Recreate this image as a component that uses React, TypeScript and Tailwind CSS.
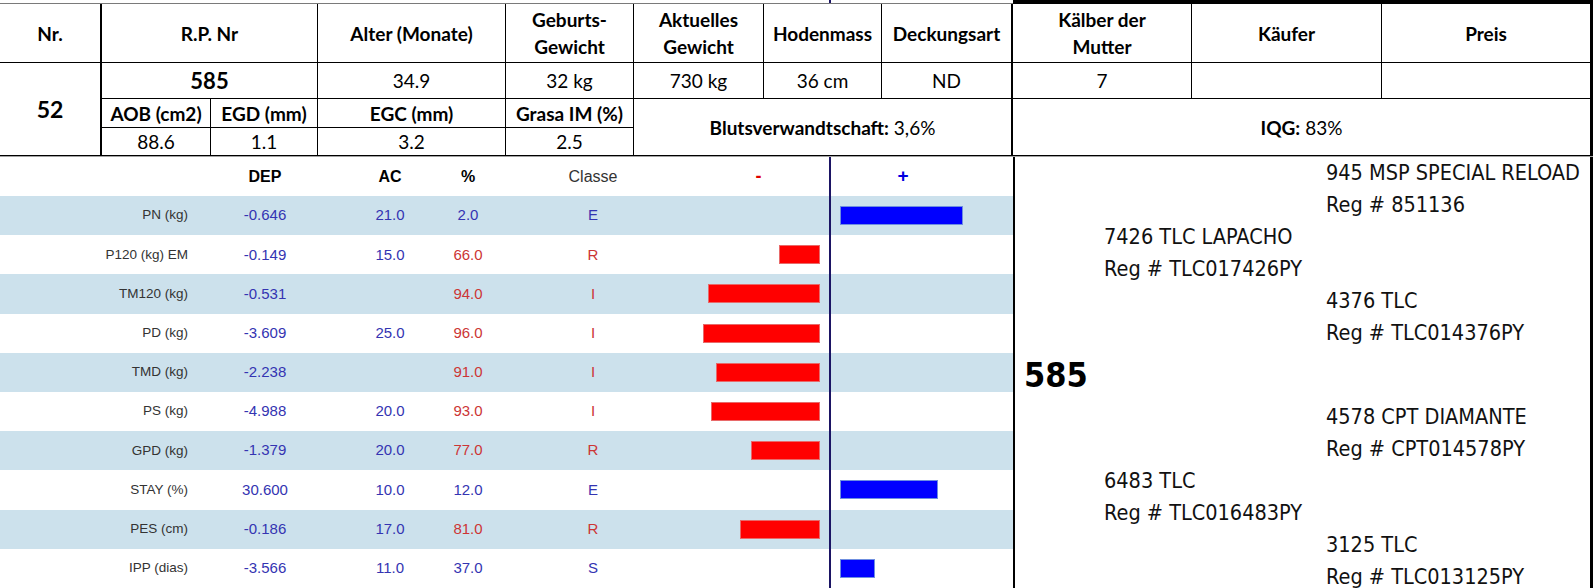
import React from 'react';

const lato = "font-['Lato','Noto_Sans',sans-serif]";
const arial = "font-['Liberation_Sans',Arial,sans-serif]";
const cond = "font-['DejaVu_Sans_Condensed','DejaVu_Sans',sans-serif]";

type Trait = {
    label: string;
    dep: string;
    ac: string;
    pct: string;
    cls: string;
    good: boolean; // blue when true, red otherwise
    bar: number; // negative = red bar to the left
};

const traits: Trait[] = [
    { label: 'PN (kg)', dep: '-0.646', ac: '21.0', pct: '2.0', cls: 'E', good: true, bar: 123 },
    { label: 'P120 (kg) EM', dep: '-0.149', ac: '15.0', pct: '66.0', cls: 'R', good: false, bar: -41 },
    { label: 'TM120 (kg)', dep: '-0.531', ac: '', pct: '94.0', cls: 'I', good: false, bar: -112 },
    { label: 'PD (kg)', dep: '-3.609', ac: '25.0', pct: '96.0', cls: 'I', good: false, bar: -117 },
    { label: 'TMD (kg)', dep: '-2.238', ac: '', pct: '91.0', cls: 'I', good: false, bar: -104 },
    { label: 'PS (kg)', dep: '-4.988', ac: '20.0', pct: '93.0', cls: 'I', good: false, bar: -109 },
    { label: 'GPD (kg)', dep: '-1.379', ac: '20.0', pct: '77.0', cls: 'R', good: false, bar: -69 },
    { label: 'STAY (%)', dep: '30.600', ac: '10.0', pct: '12.0', cls: 'E', good: true, bar: 98 },
    { label: 'PES (cm)', dep: '-0.186', ac: '17.0', pct: '81.0', cls: 'R', good: false, bar: -80 },
    { label: 'IPP (dias)', dep: '-3.566', ac: '11.0', pct: '37.0', cls: 'S', good: true, bar: 35 },
];

// pedigree lines: column (1 = animal, 2 = parents, 3 = grandparents)
const pedigree: { col: 1 | 2 | 3; text: string }[] = [
    { col: 3, text: '945 MSP SPECIAL RELOAD' },
    { col: 3, text: 'Reg # 851136' },
    { col: 2, text: '7426 TLC LAPACHO' },
    { col: 2, text: 'Reg # TLC017426PY' },
    { col: 3, text: '4376 TLC' },
    { col: 3, text: 'Reg # TLC014376PY' },
    { col: 1, text: '585' },
    { col: 3, text: '4578 CPT DIAMANTE' },
    { col: 3, text: 'Reg # CPT014578PY' },
    { col: 2, text: '6483 TLC' },
    { col: 2, text: 'Reg # TLC016483PY' },
    { col: 3, text: '3125 TLC' },
    { col: 3, text: 'Reg # TLC013125PY' },
];

function Cell({ className = '', children }: { className?: string; children?: React.ReactNode }) {
    return (
        <div className={`flex items-center justify-center text-center border-r border-b border-black ${className}`}>
            {children}
        </div>
    );
}

function InfoTable() {
    return (
        <div className={`${lato} text-[19px] text-black`}>
            {/* top edge */}
            <div className="flex h-[4px] w-[1593px]">
                <div className="flex w-[1013px] border-b border-[#7a7a7a]">
                    <div className="ml-[829px] w-[2px] bg-[#1b1464]" />
                </div>
                <div className="flex-1 bg-black" />
            </div>

            <div className="grid w-[1593px] grid-cols-[102px_109px_107px_188px_128px_130px_118px_131px_179px_190px_211px] grid-rows-[59px_36px_29px_28px] leading-[27px]">
                {/* header */}
                <Cell className="font-bold border-r-2">Nr.</Cell>
                <Cell className="col-span-2 font-bold">R.P. Nr</Cell>
                <Cell className="font-bold">Alter (Monate)</Cell>
                <Cell className="font-bold">Geburts-<br />Gewicht</Cell>
                <Cell className="font-bold">Aktuelles<br />Gewicht</Cell>
                <Cell className="font-bold">Hodenmass</Cell>
                <Cell className="font-bold border-r-2">Deckungsart</Cell>
                <Cell className="font-bold">Kälber der<br />Mutter</Cell>
                <Cell className="font-bold">Käufer</Cell>
                <Cell className="font-bold border-r-[3px]">Preis</Cell>

                {/* values */}
                <Cell className="row-span-3 border-r-2 text-[23px] font-bold">52</Cell>
                <Cell className="col-span-2 text-[22px] font-bold">585</Cell>
                <Cell>34.9</Cell>
                <Cell>32 kg</Cell>
                <Cell>730 kg</Cell>
                <Cell>36 cm</Cell>
                <Cell className="border-r-2">ND</Cell>
                <Cell>7</Cell>
                <Cell />
                <Cell className="border-r-[3px]" />

                {/* carcass headers */}
                <Cell className="font-bold">AOB (cm2)</Cell>
                <Cell className="font-bold">EGD (mm)</Cell>
                <Cell className="font-bold">EGC (mm)</Cell>
                <Cell className="font-bold">Grasa IM (%)</Cell>
                <Cell className="col-span-3 row-span-2 border-r-2">
                    <span className="font-bold">Blutsverwandtschaft:</span>&nbsp;3,6%
                </Cell>
                <Cell className="col-span-3 row-span-2 border-r-[3px]">
                    <span className="font-bold">IQG:</span>&nbsp;83%
                </Cell>

                {/* carcass values */}
                <Cell>88.6</Cell>
                <Cell>1.1</Cell>
                <Cell>3.2</Cell>
                <Cell>2.5</Cell>
            </div>
            <div className="h-px w-[1593px] bg-[#a3a3a3]" />
        </div>
    );
}

function TraitChart() {
    const blue = 'text-[#3434b2]';
    const red = 'text-[#cc3535]';
    return (
        <div className={`${arial} w-[1013px] text-[15px]`}>
            <div className="flex h-[39px] items-center">
                <div className="w-[188px]" />
                <div className="w-[154px] text-center text-[16px] font-bold text-black">DEP</div>
                <div className="w-[96px] text-center text-[16px] font-bold text-black">AC</div>
                <div className="w-[60px] text-center text-[16px] font-bold text-black">%</div>
                <div className="w-[190px] text-center text-[16px] text-[#333]">Classe</div>
                <div className="flex h-full w-[141px] items-center justify-center text-[18px] font-bold text-[#e00000]">-</div>
                <div className="flex h-full flex-1 items-center border-l-2 border-[#1b1464]">
                    <span className="w-[144px] text-center text-[19px] font-bold text-[#0000e0]">+</span>
                </div>
            </div>

            {traits.map((t, i) => (
                <div key={t.label} className={`flex h-[39.2px] items-center ${i % 2 === 0 ? 'bg-[#cce1ec]' : 'bg-white'}`}>
                    <div className="w-[188px] text-right text-[13.5px] text-[#333]">{t.label}</div>
                    <div className={`w-[154px] text-center ${blue}`}>{t.dep}</div>
                    <div className={`w-[96px] text-center ${blue}`}>{t.ac}</div>
                    <div className={`w-[60px] text-center ${t.good ? blue : red}`}>{t.pct}</div>
                    <div className={`w-[190px] text-center ${t.good ? blue : red}`}>{t.cls}</div>
                    <div className="flex h-full w-[141px] items-center justify-end pr-[9px]">
                        {t.bar < 0 && (
                            <div className="h-[19px] border border-[#e86a6a] bg-[#ff0000]" style={{ width: -t.bar }} />
                        )}
                    </div>
                    <div className="flex h-full flex-1 items-center border-l-2 border-[#1b1464] pl-[9px]">
                        {t.bar > 0 && (
                            <div className="h-[19px] border border-[#6f8fe0] bg-[#0000ff]" style={{ width: t.bar }} />
                        )}
                    </div>
                </div>
            ))}
        </div>
    );
}

function Pedigree() {
    return (
        <div className={`${cond} w-[580px] border-l-2 border-r-[3px] border-black text-[21.5px] text-[#111]`}>
            <div className="grid grid-cols-[89px_222px_1fr]">
                {pedigree.map((p, i) =>
                    p.col === 1 ? (
                        <div key={i} className="col-span-3 flex h-[52px] items-center pl-[9px] text-[34px] font-bold text-black">
                            {p.text}
                        </div>
                    ) : (
                        <React.Fragment key={i}>
                            <div className={p.col === 2 ? 'h-[32px]' : 'col-span-2 h-[32px]'} />
                            <div className={`whitespace-nowrap leading-[32px] ${p.col === 2 ? 'col-span-2' : ''}`}>{p.text}</div>
                        </React.Fragment>
                    )
                )}
            </div>
        </div>
    );
}

export default function App() {
    return (
        <div className="h-[588px] w-[1595px] overflow-hidden bg-white">
            <InfoTable />
            <div className="flex">
                <TraitChart />
                <Pedigree />
            </div>
        </div>
    );
}
